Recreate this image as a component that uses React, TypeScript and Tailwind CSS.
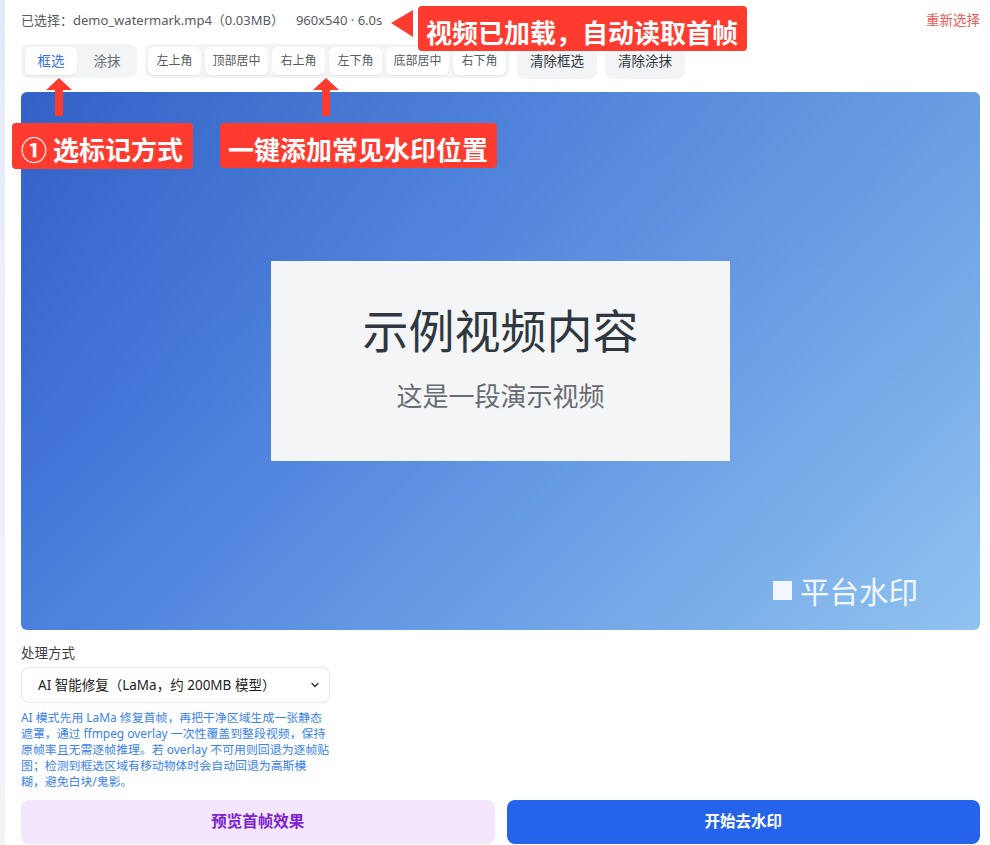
import React from "react";

const FONT = "font-['Noto_Sans','Noto_Sans_CJK_SC',sans-serif]";

function Callout({ children, className }: { children: React.ReactNode; className: string }) {
  return (
    <div
      className={`absolute bg-[#ff3b30] rounded-[4px] text-white font-bold text-[26px] leading-none flex items-end whitespace-nowrap font-['Noto_Sans_CJK_SC',sans-serif] ${className}`}
    >
      {children}
    </div>
  );
}

function UpArrow({ left }: { left: number }) {
  return (
    <svg
      className="absolute top-[78px]"
      style={{ left }}
      width="26"
      height="38"
      viewBox="0 0 26 38"
    >
      <polygon points="13,0 0,12 26,12" fill="#ff3b30" />
      <rect x="9" y="11" width="8" height="27" fill="#ff3b30" />
    </svg>
  );
}

export default function App() {
  const positions: [string, string][] = [
    ["左上角", "w-[53px]"],
    ["顶部居中", "w-[63px]"],
    ["右上角", "w-[53px]"],
    ["左下角", "w-[53px]"],
    ["底部居中", "w-[63px]"],
    ["右下角", "w-[53px]"],
  ];
  return (
    <div className={`relative h-[845px] w-[990px] overflow-hidden bg-white flex ${FONT}`}>
      <div className="w-[5px] shrink-0 bg-[linear-gradient(to_bottom,#e3e7fa,#eef1fa_40%,#f1f3f9)]" />
      <div className="flex-1 pl-[16px] pr-[10px] pt-[11px] flex flex-col">
        {/* header */}
        <div className="flex items-center justify-between h-[18px] text-[13px] leading-[18px]">
          <div className="text-[#555a60] flex items-center">
            <span>已选择：demo_watermark.mp4（0.03MB）</span>
            <span className="ml-[12px]">960x540 · 6.0s</span>
          </div>
          <div className="text-[#ef5a5a] text-[13.5px]">重新选择</div>
        </div>

        {/* tools row */}
        <div className="mt-[15px] flex items-center gap-[8px] h-[34px]">
          <div className="flex items-center gap-[4px] bg-[#f3f4f6] rounded-[8px] px-[4px] py-[3px] h-[34px]">
            <button className="w-[52px] h-[28px] rounded-[6px] bg-white shadow-[0_1px_2px_rgba(0,0,0,0.08)] text-[13.5px] text-[#3b6fe0]">
              框选
            </button>
            <button className="w-[52px] h-[28px] rounded-[6px] text-[13.5px] text-[#666b72]">涂抹</button>
          </div>
          <div className="flex items-center gap-[4px] bg-[#f3f4f6] rounded-[8px] p-[3px] h-[34px]">
            {positions.map(([p, w]) => (
              <button
                key={p}
                className={`${w} h-[28px] rounded-[6px] bg-white shadow-[0_1px_2px_rgba(0,0,0,0.06)] text-[12px] text-[#555a60]`}
              >
                {p}
              </button>
            ))}
          </div>
          <button className="w-[80px] h-[35px] rounded-[8px] bg-[#f3f4f6] text-[13.5px] text-[#2f3439]">清除框选</button>
          <button className="w-[80px] h-[35px] rounded-[8px] bg-[#f3f4f6] text-[13.5px] text-[#2f3439]">清除涂抹</button>
        </div>

        {/* canvas */}
        <div className="relative mt-[14px] h-[538px] rounded-[6px] overflow-hidden bg-[linear-gradient(135deg,#2a59c6_0%,#4a7fdc_35%,#6499e4_60%,#90c3ef_100%)] flex items-center justify-center">
          <div className="absolute inset-0 bg-[linear-gradient(to_bottom,rgba(120,160,200,0.12),rgba(80,120,240,0)_60%)]" />
          <div className="relative w-[459px] h-[200px] bg-[#f4f5f6] flex flex-col items-center font-['Noto_Sans_CJK_SC',sans-serif]">
            <div className="mt-[39px] text-[46px] leading-[56px] text-[#2f3740]">示例视频内容</div>
            <div className="mt-[22px] text-[26px] leading-[34px] text-[#686d73]">这是一段演示视频</div>
          </div>
          <div className="absolute right-[62px] bottom-[20px] flex items-center text-white/90 font-['Noto_Sans_CJK_SC',sans-serif]">
            <span className="inline-block w-[19px] h-[19px] bg-white/90 mr-[8px]" />
            <span className="text-[29.5px] leading-[40px]">平台水印</span>
          </div>
        </div>

        {/* processing */}
        <div className="mt-[13px] text-[13.5px] leading-[20px] text-[#3a3f45]">处理方式</div>
        <div className="mt-[4px] h-[36px] w-[309px] rounded-[8px] border border-[#e5e7eb] bg-white flex items-center justify-between pl-[16px] pr-[8px] text-[13.5px] text-[#222]">
          <span>AI 智能修复（LaMa，约 200MB 模型）</span>
          <svg width="12" height="12" viewBox="0 0 12 12">
            <path d="M3 4.5 L6 7.5 L9 4.5" fill="none" stroke="#333" strokeWidth="1.4" strokeLinecap="round" strokeLinejoin="round" />
          </svg>
        </div>
        <div className="mt-[6px] text-[11.9px] leading-[16px] text-[#3b7ff0] whitespace-nowrap">
          <div>AI 模式先用 LaMa 修复首帧，再把干净区域生成一张静态</div>
          <div>遮罩，通过 ffmpeg overlay 一次性覆盖到整段视频，保持</div>
          <div>原帧率且无需逐帧推理。若 overlay 不可用则回退为逐帧贴</div>
          <div>图；检测到框选区域有移动物体时会自动回退为高斯模</div>
          <div>糊，避免白块/鬼影。</div>
        </div>

        {/* buttons */}
        <div className="mt-[11px] grid grid-cols-2 gap-[12px]">
          <button className="h-[44px] rounded-[8px] bg-[#f3e6fd] text-[#7e22ce] text-[15.5px] font-bold">预览首帧效果</button>
          <button className="h-[44px] rounded-[8px] bg-[#2563eb] text-white text-[15.5px] font-bold">开始去水印</button>
        </div>
      </div>

      {/* annotations */}
      <svg className="absolute left-[391px] top-[10px]" width="22" height="27" viewBox="0 0 22 27">
        <polygon points="0,13 22,0 22,27" fill="#ff3b30" />
      </svg>
      <Callout className="left-[418px] top-[6px] h-[45px] pl-[8px] pr-[9px] pb-[6px]">视频已加载，自动读取首帧</Callout>
      <UpArrow left={46} />
      <UpArrow left={313} />
      <Callout className="left-[12px] top-[123px] h-[46px] pl-[9px] pr-[10px] pb-[7px]">① 选标记方式</Callout>
      <Callout className="left-[220px] top-[123px] h-[45px] pl-[8px] pr-[9px] pb-[6px]">一键添加常见水印位置</Callout>
    </div>
  );
}
